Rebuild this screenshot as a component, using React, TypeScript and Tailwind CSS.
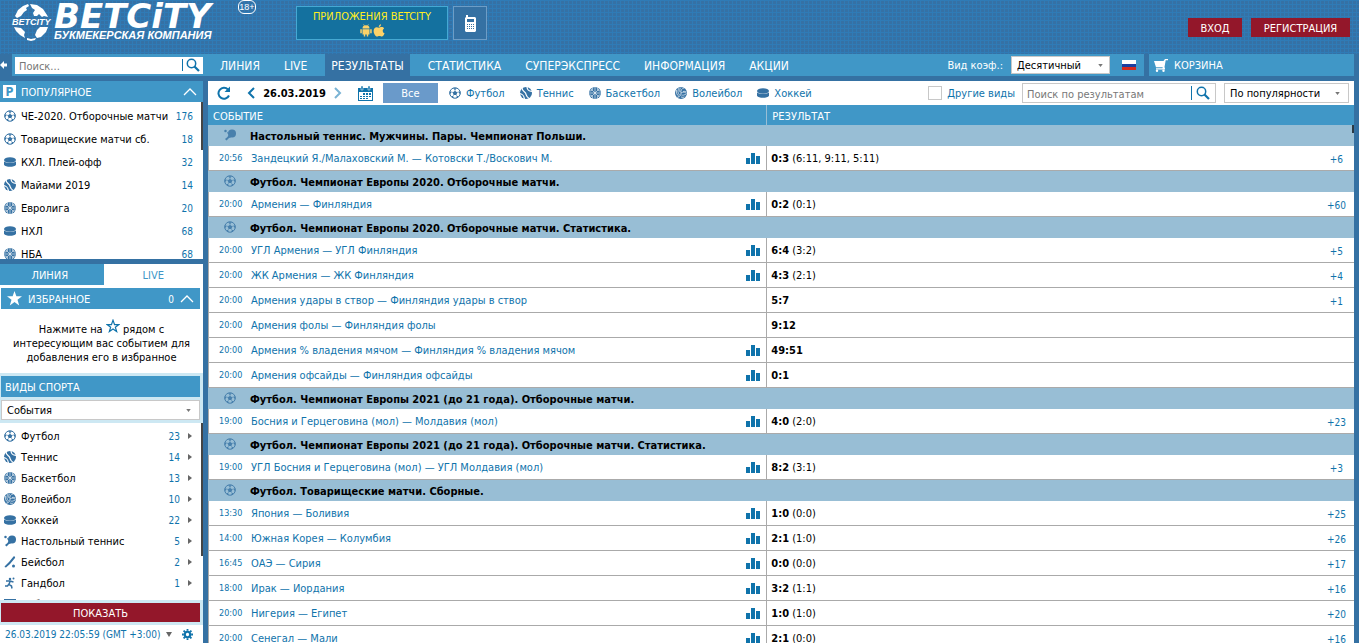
import type { ReactNode } from 'react';
import clsx from 'clsx';

type Sport =
  | 'football'
  | 'tennis'
  | 'basketball'
  | 'volleyball'
  | 'hockey'
  | 'tabletennis'
  | 'baseball'
  | 'handball'
  | 'futsal';

type Match = { time: string; name: string; score: string; detail?: string; stats?: boolean; extra?: string };
type Group = { sport: Sport; title: string; matches: Match[] };

const navItems = ['ЛИНИЯ', 'LIVE', 'РЕЗУЛЬТАТЫ', 'СТАТИСТИКА', 'СУПЕРЭКСПРЕСС', 'ИНФОРМАЦИЯ', 'АКЦИИ'];

const popular: { sport: Sport; name: string; count: number }[] = [
  { sport: 'football', name: 'ЧЕ-2020. Отборочные матчи', count: 176 },
  { sport: 'football', name: 'Товарищеские матчи сб.', count: 18 },
  { sport: 'hockey', name: 'КХЛ. Плей-офф', count: 32 },
  { sport: 'tennis', name: 'Майами 2019', count: 14 },
  { sport: 'basketball', name: 'Евролига', count: 20 },
  { sport: 'hockey', name: 'НХЛ', count: 68 },
  { sport: 'basketball', name: 'НБА', count: 68 },
];

const sports: { sport: Sport; name: string; count: number }[] = [
  { sport: 'football', name: 'Футбол', count: 23 },
  { sport: 'tennis', name: 'Теннис', count: 14 },
  { sport: 'basketball', name: 'Баскетбол', count: 13 },
  { sport: 'volleyball', name: 'Волейбол', count: 10 },
  { sport: 'hockey', name: 'Хоккей', count: 22 },
  { sport: 'tabletennis', name: 'Настольный теннис', count: 5 },
  { sport: 'baseball', name: 'Бейсбол', count: 2 },
  { sport: 'handball', name: 'Гандбол', count: 1 },
  { sport: 'futsal', name: 'Киберспорт', count: 1 },
];

const filters: { sport: Sport; name: string }[] = [
  { sport: 'football', name: 'Футбол' },
  { sport: 'tennis', name: 'Теннис' },
  { sport: 'basketball', name: 'Баскетбол' },
  { sport: 'volleyball', name: 'Волейбол' },
  { sport: 'hockey', name: 'Хоккей' },
];

const groups: Group[] = [
  {
    sport: 'tabletennis',
    title: 'Настольный теннис. Мужчины. Пары. Чемпионат Польши.',
    matches: [
      { time: '20:56', name: 'Зандецкий Я./Малаховский М. — Котовски Т./Воскович М.', score: '0:3', detail: '(6:11, 9:11, 5:11)', stats: true, extra: '+6' },
    ],
  },
  {
    sport: 'football',
    title: 'Футбол. Чемпионат Европы 2020. Отборочные матчи.',
    matches: [{ time: '20:00', name: 'Армения — Финляндия', score: '0:2', detail: '(0:1)', stats: true, extra: '+60' }],
  },
  {
    sport: 'football',
    title: 'Футбол. Чемпионат Европы 2020. Отборочные матчи. Статистика.',
    matches: [
      { time: '20:00', name: 'УГЛ Армения — УГЛ Финляндия', score: '6:4', detail: '(3:2)', stats: true, extra: '+5' },
      { time: '20:00', name: 'ЖК Армения — ЖК Финляндия', score: '4:3', detail: '(2:1)', stats: true, extra: '+4' },
      { time: '20:00', name: 'Армения удары в створ — Финляндия удары в створ', score: '5:7', extra: '+1' },
      { time: '20:00', name: 'Армения фолы — Финляндия фолы', score: '9:12' },
      { time: '20:00', name: 'Армения % владения мячом — Финляндия % владения мячом', score: '49:51', stats: true },
      { time: '20:00', name: 'Армения офсайды — Финляндия офсайды', score: '0:1', stats: true },
    ],
  },
  {
    sport: 'football',
    title: 'Футбол. Чемпионат Европы 2021 (до 21 года). Отборочные матчи.',
    matches: [{ time: '19:00', name: 'Босния и Герцеговина (мол) — Молдавия (мол)', score: '4:0', detail: '(2:0)', stats: true, extra: '+23' }],
  },
  {
    sport: 'football',
    title: 'Футбол. Чемпионат Европы 2021 (до 21 года). Отборочные матчи. Статистика.',
    matches: [{ time: '19:00', name: 'УГЛ Босния и Герцеговина (мол) — УГЛ Молдавия (мол)', score: '8:2', detail: '(3:1)', stats: true, extra: '+3' }],
  },
  {
    sport: 'football',
    title: 'Футбол. Товарищеские матчи. Сборные.',
    matches: [
      { time: '13:30', name: 'Япония — Боливия', score: '1:0', detail: '(0:0)', stats: true, extra: '+25' },
      { time: '14:00', name: 'Южная Корея — Колумбия', score: '2:1', detail: '(1:0)', stats: true, extra: '+26' },
      { time: '16:45', name: 'ОАЭ — Сирия', score: '0:0', detail: '(0:0)', stats: true, extra: '+17' },
      { time: '18:00', name: 'Ирак — Иордания', score: '3:2', detail: '(1:1)', stats: true, extra: '+16' },
      { time: '20:00', name: 'Нигерия — Египет', score: '1:0', detail: '(1:0)', stats: true, extra: '+20' },
      { time: '20:00', name: 'Сенегал — Мали', score: '2:1', detail: '(0:0)', stats: true, extra: '+16' },
    ],
  },
];

const sportShapes: Record<Sport, ReactNode> = {
  football: (
    <>
      <circle cx="12" cy="12" r="10.5" fill="none" stroke="currentColor" strokeWidth="2" />
      <path d="M12 7.500l4.600 3.300-1.800 5.400H9.200l-1.800-5.400z" />
      <path d="M12 8V4M16 11l4-1.500M14.500 16l2.500 3.500M9.500 16L7 19.500M8 11L4 9.500" stroke="currentColor" strokeWidth="1" />
      <path d="M8 2.500h8L12 6zM22.500 8l.5 7-4-4zM1.500 8L1 15l4-4zM14 22.500l6-4-4-.5zM10 22.500l-6-4 4-.5z" />
    </>
  ),
  tennis: (
    <>
      <circle cx="12" cy="12" r="12" />
      <path d="M4 1c0 8 5 7 7 11s1 8 8 11M14-1c0 7 3 9 11 10M-1 13c7 1 9 4 10 12" fill="none" stroke="white" strokeWidth="2.500" />
    </>
  ),
  basketball: (
    <>
      <circle cx="12" cy="12" r="12" />
      <path d="M4 4l16 16M20 4L4 20M12 0v24M0 12h24M7 1c1 5-1 7-6 7M17 23c-1-5 1-7 6-7M17 1c-1 5 1 7 6 7M7 23c1-5-1-7-6-7" fill="none" stroke="white" strokeWidth="1.200" />
    </>
  ),
  volleyball: (
    <>
      <circle cx="12" cy="12" r="12" />
      <path d="M12 12C11 7 13 3 18 2M12 12c5-3 8-2 11 1M12 12c0 5-3 8-8 9M8 2c-3 5-3 10 1 14M3 6c-1 6 1 10 5 13M16 9c3-1 5 0 7 1M13 16c3 1 6 0 9-2M12 20c3 1 5 1 7 0M12 1c-3 3-3 6-2 9" fill="none" stroke="white" strokeWidth="1.300" />
    </>
  ),
  hockey: (
    <>
      <ellipse cx="12" cy="8" rx="12" ry="5.500" />
      <path d="M0 10.500c3 4.500 21 4.500 24 0v7c-3 5.500-21 5.500-24 0z" />
    </>
  ),
  tabletennis: (
    <>
      <circle cx="16" cy="9" r="8" />
      <path d="M9 12l5 5-4 1-5 5-3-3 5-4z" />
      <circle cx="3" cy="4" r="2.500" />
      <path d="M6 7l4 3" stroke="currentColor" strokeWidth="2" />
    </>
  ),
  baseball: (
    <>
      <path d="M19 1c2-1 4 1 3 3L12 16l-8 7-3-1 1-2 8-8z" />
      <circle cx="19" cy="20" r="3" />
    </>
  ),
  handball: (
    <>
      <circle cx="12" cy="4" r="2.500" />
      <circle cx="19" cy="3" r="2" />
      <path d="M4 8h8l7 2M12 9l-2 6 5 3 1 5M10 14l-3 4H2" fill="none" stroke="currentColor" strokeWidth="3" />
    </>
  ),
  futsal: <path d="M0 2h24v18H0z" />,
};

function SportIcon({ sport, className }: { sport: Sport; className?: string }) {
  return (
    <svg viewBox="0 0 24 24" fill="currentColor" className={clsx('mb-[2px] size-3 shrink-0 text-[#3571a3]', className)}>
      {sportShapes[sport]}
    </svg>
  );
}

function SearchIcon() {
  return (
    <svg viewBox="0 0 14 14" fill="none" stroke="currentColor" className="size-[14px]">
      <circle cx="5.500" cy="5.500" r="4.200" strokeWidth="1.500" />
      <path d="M8.500 8.500l4.500 4.500" strokeWidth="2.200" />
    </svg>
  );
}

function SmallArrow() {
  return (
    <svg viewBox="0 0 6 4" fill="#777" className="pointer-events-none h-[3px] w-[5px] shrink-0">
      <path d="M0 0h6L3 4z" />
    </svg>
  );
}

function ChevronUp() {
  return (
    <svg viewBox="0 0 14 8" fill="none" stroke="white" strokeWidth="1.300" className="h-2 w-[14px]">
      <path d="M1 7l6-6 6 6" />
    </svg>
  );
}

function Globe() {
  return (
    <svg viewBox="0 0 38 38" className="size-[38px] shrink-0 overflow-visible" fill="white">
      <path d="M3 13l3-6 5-4 5-2 1 2-3 2 1 2-3 2-3 4-4 2z" />
      <path d="M18 1l7 1 6 4 4 6 1 2-4-1-2 1-3-3-2 2-3 0-1-3 2-3-3-2z" />
      <path d="M2 24l7 1 4 4-1 3 1 3-5-3-4-4z" />
      <path d="M25 27l3-3 8 0-2 5-5 5-4 1-2-3z" />
      <path d="M15 35l4 1 5-1-1 2-4 1-4-1z" />
      <text x="0" y="22" fontSize="9" fontWeight="700" fontStyle="italic" fontFamily="Liberation Sans, sans-serif">
        BETCITY
      </text>
    </svg>
  );
}

function Header() {
  return (
    <header className="flex h-[54px] shrink-0 items-start justify-between bg-[#3571a5] bg-[linear-gradient(#2f7bb6_1px,transparent_1px),linear-gradient(90deg,#2f7bb6_1px,transparent_1px)] bg-[size:4px_4px]">
      <div className="flex">
        <a href="#" className="flex w-[296px] pl-3 text-white">
          <span className="pt-[3px]">
            <Globe />
          </span>
          <span className="flex w-[188px] flex-col pt-[3px] pl-1">
            <span className="font-['DejaVu_Sans',sans-serif] text-[34px] leading-[26px] font-bold italic">BETCiTY</span>
            <span className="font-['Liberation_Sans',sans-serif] text-[11px] leading-[12px] font-bold italic">БУКМЕКЕРСКАЯ КОМПАНИЯ</span>
          </span>
          <span className="flex h-[14px] w-[18px] items-center justify-center rounded-md border border-white font-['Liberation_Sans',sans-serif] text-[9px]">
            18+
          </span>
        </a>
        <div className="flex gap-[5px] pt-[6px]">
          <button className="flex h-[34px] w-[152px] flex-col items-center border border-[#45a9d3] bg-[#14719f] pt-[3px] leading-[14px] text-[#ffee22]">
            ПРИЛОЖЕНИЯ BETCITY
            <span className="flex gap-px text-[#fdd268]">
              <svg viewBox="0 0 12 13" fill="currentColor" className="h-[13px] w-3">
                <path d="M2.500 4.500a3.500 3.300 0 017 0zM2.500 5.200h7v5.300h-1.300v2H6.800v-2H5.200v2H3.800v-2H2.500zM.3 5.200h1.500v4H.3zM10.200 5.200h1.500v4h-1.500z" />
                <path d="M3.500.3l1 1.500M8.500.3l-1 1.500" stroke="currentColor" strokeWidth=".6" />
              </svg>
              <svg viewBox="0 0 12 13" fill="currentColor" className="h-[13px] w-3">
                <path d="M8 .3c.1 1.500-.9 2.700-2.200 2.700C5.700 1.600 6.700.5 8 .3zM6 3.700c.7 0 1.500-.6 2.700-.6 1 0 1.900.5 2.400 1.300-2 1.200-1.700 4 .5 4.900-.5 1.400-1.600 3.300-2.800 3.300-.9 0-1.300-.5-2.400-.5s-1.500.5-2.400.5C2.500 12.600.6 9.500.6 7c0-2.400 1.500-3.800 3-3.800 1 0 1.700.5 2.400.5z" />
              </svg>
            </span>
          </button>
          <button aria-label="Мобильная версия" className="flex h-[34px] w-[34px] items-center justify-center border border-[#6d9dc6] bg-[#3571a3]">
            <svg viewBox="0 0 11 17" className="h-[17px] w-[11px]">
              <path d="M1 0h2v2h7l1 1v13l-1 1H1l-1-1V3l1-1z" fill="white" />
              <path d="M2 4h7v3H2zM2 9h1v1H2zM4 9h1v1H4zM6 9h1v1H6zM8 9h1v1H8zM2 11h1v1H2zM4 11h1v1H4zM6 11h1v1H6zM8 11h1v1H8zM2 13h1v1H2zM4 13h1v1H4zM6 13h1v1H6zM8 13h1v1H8z" fill="#3571a3" />
            </svg>
          </button>
        </div>
      </div>
      <div className="flex gap-[9px] pt-[18px] pr-[9px] text-white">
        <button className="h-[19px] w-[54px] bg-[#93172a] pt-[2px]">ВХОД</button>
        <button className="h-[19px] w-[99px] bg-[#93172a] pt-[2px]">РЕГИСТРАЦИЯ</button>
      </div>
    </header>
  );
}

function NavBar() {
  return (
    <div className="flex h-[22px] shrink-0 pr-[5px] text-[12px] text-white">
      <button aria-label="Свернуть меню" className="flex w-3 shrink-0 items-center">
        <svg viewBox="0 0 7 8" fill="white" className="h-2 w-[7px]">
          <path d="M0 4l4-4v2.500h3v3H4V8z" />
        </svg>
      </button>
      <div className="mr-[5px] flex flex-1 items-center bg-[#4097c7] pl-[3px]">
        <label className="flex h-[17px] w-[188px] items-center bg-white pr-[3px] text-[#0f73ab]">
          <input aria-label="Поиск" placeholder="Поиск..." className="w-0 flex-1 pt-[2px] pl-1 text-[11px] text-black outline-none placeholder:text-[#777]" />
          <span className="mr-[3px] h-3 w-px bg-[#0f73ab]" />
          <SearchIcon />
        </label>
        <nav className="flex h-[22px] flex-1 gap-3 pl-[11px]">
          {navItems.map((item) => (
            <a key={item} href="#" className={clsx('px-[6px] leading-[24px]', item === 'РЕЗУЛЬТАТЫ' && 'bg-[#3571a3]')}>
              {item}
            </a>
          ))}
        </nav>
        <label htmlFor="odds" className="pt-px pr-2 text-[11px]">
          Вид коэф.:
        </label>
        <div className="mr-3 flex h-[18px] w-[99px] items-center border border-[#c8c8c8] bg-white pr-[6px] text-[11px] text-black">
          <select id="odds" className="w-0 flex-1 appearance-none pt-px pl-[5px] outline-none">
            <option>Десятичный</option>
          </select>
          <SmallArrow />
        </div>
        <svg viewBox="0 0 14 10" className="mr-2 h-[10px] w-[14px]">
          <path d="M0 0h14v4H0z" fill="#fff" />
          <path d="M0 4h14v3H0z" fill="#1c3fa0" />
          <path d="M0 7h14v3H0z" fill="#d52b1e" />
        </svg>
      </div>
      <a href="#" className="flex w-[205px] items-center gap-[6px] bg-[#4097c7] pl-[5px] text-[11px]">
        <svg viewBox="0 0 14 13" fill="white" className="h-[13px] w-[14px]">
          <path d="M0 2h9.500L11 0h3v1.300h-2.300L10.500 8 11 9.500v1H2v-1.200h6.500l.2-1H2z" />
          <circle cx="3" cy="11.800" r="1.200" />
          <circle cx="9.500" cy="11.800" r="1.200" />
        </svg>
        <span className="pt-px">КОРЗИНА</span>
      </a>
    </div>
  );
}

function Sidebar() {
  return (
    <aside className="flex w-[203px] shrink-0 flex-col bg-white">
      <div className="flex h-[21px] shrink-0 items-center bg-[#4097c7] pr-[6px] pl-[3px] text-white">
        <span className="mr-[5px] flex h-[13px] w-[13px] items-center justify-center bg-white pt-px text-[12px] font-bold text-[#4097c7]">P</span>
        <span className="flex-1 pt-px">ПОПУЛЯРНОЕ</span>
        <ChevronUp />
      </div>
      <div className="relative h-[157px] shrink-0 overflow-hidden pt-[3px]">
        {popular.map((item) => (
          <a key={item.name} href="#" className="flex h-[23px] items-center gap-[5px] pr-[10px] pl-1">
            <SportIcon sport={item.sport} />
            <span className="flex-1 whitespace-nowrap">{item.name}</span>
            <span className="text-[10px] text-[#0f73ab]">{item.count}</span>
          </a>
        ))}
        <span className="absolute top-0 right-0 h-12 w-[2px] bg-[#444]" />
      </div>
      <div className="h-[5px] shrink-0 bg-[#3571a3]" />
      <div className="flex h-[21px] shrink-0">
        <button className="flex-1 bg-[#4097c7] pt-[2px] pr-1 text-white">ЛИНИЯ</button>
        <button className="flex-1 pt-[2px] text-[#4097c7]">LIVE</button>
      </div>
      <div className="mt-[3px] mr-[3px] ml-px flex h-[21px] shrink-0 items-center bg-[#4097c7] pr-[6px] pl-[6px] text-white">
        <svg viewBox="0 0 24 24" fill="white" className="mr-[6px] size-[15px]">
          <path d="M12 0l3 8.500h9l-7.200 5.500 2.700 9L12 17.500 4.500 23l2.700-9L0 8.500h9z" />
        </svg>
        <span className="flex-1 pt-px">ИЗБРАННОЕ</span>
        <span className="mr-[6px] pt-px text-[10px]">0</span>
        <ChevronUp />
      </div>
      <p className="h-16 shrink-0 px-2 pt-[14px] text-center leading-[14px]">
        Нажмите на{' '}
        <svg viewBox="0 0 24 24" fill="none" stroke="#0f73ab" strokeWidth="2" className="-mt-2 inline-block size-[14px] align-baseline">
          <path d="M12 2l2.600 7.500H22l-6 4.500 2.300 7.500L12 17l-6.300 4.500L8 14 2 9.500h7.400z" />
        </svg>{' '}
        рядом с<br />
        интересующим вас событием для добавления его в избранное
      </p>
      <div className="h-[50px] shrink-0 bg-[#cde8f3] pt-[3px] pr-[3px] pl-px">
        <label htmlFor="kind" className="mb-[3px] flex h-[21px] items-center bg-[#4097c7] pt-px pl-1 text-white">
          ВИДЫ СПОРТА
        </label>
        <div className="flex h-5 items-center border border-[#c8c8c8] bg-white pr-2">
          <select id="kind" className="w-0 flex-1 appearance-none pt-px pl-[5px] outline-none">
            <option>События</option>
          </select>
          <SmallArrow />
        </div>
      </div>
      <div className="relative min-h-0 flex-1 overflow-hidden pt-[3px]">
        {sports.map((item) => (
          <a key={item.name} href="#" className="flex h-[21px] items-center pr-[11px] pl-1">
            <SportIcon sport={item.sport} className="mr-[5px]" />
            <span className="flex-1">{item.name}</span>
            <span className="mr-2 text-[10px] text-[#0f73ab]">{item.count}</span>
            <svg viewBox="0 0 4 6" fill="#666" className="mb-[2px] h-[6px] w-1">
              <path d="M0 0l4 3-4 3z" />
            </svg>
          </a>
        ))}
        <span className="absolute top-0 right-0 h-[133px] w-[2px] bg-[#444]" />
      </div>
      <div className="shrink-0 bg-[#cde8f3] py-[3px] pr-[3px] pl-px">
        <button className="block h-[19px] w-full bg-[#93172a] pt-[2px] text-white">ПОКАЗАТЬ</button>
      </div>
      <div className="flex h-[18px] shrink-0 items-center pl-[5px] text-[10px] text-[#0f73ab]">
        26.03.2019 22:05:59 (GMT +3:00)
        <svg viewBox="0 0 6 5" fill="#666" className="mr-[10px] ml-[6px] h-[5px] w-[6px]">
          <path d="M0 0h6L3 5z" />
        </svg>
        <svg viewBox="0 0 12 12" fill="none" stroke="currentColor" className="size-[11px]">
          <circle cx="6" cy="6" r="3" strokeWidth="2.400" />
          <path d="M6 0v2M6 10v2M0 6h2M10 6h2M1.700 1.700l1.500 1.500M8.800 8.800l1.500 1.500M1.700 10.300l1.500-1.500M8.800 3.200l1.500-1.500" strokeWidth="2" />
        </svg>
      </div>
    </aside>
  );
}

function Toolbar() {
  return (
    <div className="flex h-6 shrink-0 items-center bg-white pr-[5px] pl-[9px] text-[#0f73ab]">
      <button aria-label="Обновить">
        <svg viewBox="0 0 14 14" fill="none" stroke="currentColor" strokeWidth="2" className="size-[14px]">
          <path d="M12 9.500a5.500 5.500 0 11-1-6" />
          <path d="M13 .5v5.500H7.500z" fill="currentColor" stroke="none" />
        </svg>
      </button>
      <button aria-label="Предыдущий день" className="ml-4">
        <svg viewBox="0 0 8 12" fill="none" stroke="currentColor" strokeWidth="2" className="h-3 w-2">
          <path d="M7 1L2 6l5 5" />
        </svg>
      </button>
      <b className="w-[79px] pt-px text-center text-black">26.03.2019</b>
      <button aria-label="Следующий день" className="text-[#7ab3d4]">
        <svg viewBox="0 0 8 12" fill="none" stroke="currentColor" strokeWidth="2" className="h-3 w-2">
          <path d="M1 1l5 5-5 5" />
        </svg>
      </button>
      <button aria-label="Календарь" className="ml-4">
        <svg viewBox="0 0 15 15" className="size-[15px]" fill="currentColor">
          <path d="M0 2h15v13H0zM1 6v8h13V6z" fillRule="evenodd" />
          <path d="M3 0h2v4H3zM10 0h2v4h-2z" stroke="white" strokeWidth=".5" />
          <path d="M5 7h2v2H5zM8 7h2v2H8zM11 7h2v2h-2zM2 10h2v1H2zM5 10h2v1H5zM8 10h2v1H8zM11 10h2v1h-2zM2 12h2v1H2zM5 12h2v1H5zM8 12h2v1H8z" />
        </svg>
      </button>
      <button className="mr-[11px] ml-[10px] h-5 w-[55px] bg-[#6a9aca] pt-px text-white">Все</button>
      <div className="flex flex-1 gap-[15px]">
        {filters.map((f) => (
          <a key={f.name} href="#" className="flex items-center gap-[5px] pt-px">
            <SportIcon sport={f.sport} />
            {f.name}
          </a>
        ))}
      </div>
      <label className="mr-[7px] flex items-center gap-[5px]">
        <input type="checkbox" className="size-[14px] appearance-none border border-[#c8c8c8]" />
        <span className="pt-px">Другие виды</span>
      </label>
      <label className="mr-2 flex h-5 w-[194px] items-center border border-[#c8c8c8] pr-[5px]">
        <input aria-label="Поиск по результатам" placeholder="Поиск по результатам" className="w-0 flex-1 pt-[2px] pl-1 text-black outline-none placeholder:text-[#777]" />
        <span className="mr-1 h-[14px] w-px bg-[#0f73ab]" />
        <SearchIcon />
      </label>
      <div className="flex h-5 w-[125px] items-center border border-[#c8c8c8] pr-2 text-black">
        <select aria-label="Сортировка" className="w-0 flex-1 appearance-none pt-px pl-[5px] outline-none">
          <option>По популярности</option>
        </select>
        <SmallArrow />
      </div>
    </div>
  );
}

function ResultsTable() {
  return (
    <table className="w-full table-fixed border-separate border-spacing-0 bg-white">
      <colgroup>
        <col className="w-[42px]" />
        <col className="w-[42%]" />
        <col className="w-9" />
        <col />
        <col className="w-12" />
      </colgroup>
      <thead>
        <tr className="h-5 bg-[#4097c7] text-left text-white">
          <th colSpan={3} className="border-r border-[#98bed5] pt-[2px] pl-[5px] font-normal">
            СОБЫТИЕ
          </th>
          <th colSpan={2} className="pt-[2px] pl-[5px] font-normal">
            РЕЗУЛЬТАТ
          </th>
        </tr>
      </thead>
      {groups.map((group) => (
        <tbody key={group.title}>
          <tr className="h-[21px] bg-[#98bed5]">
            <td>
              <SportIcon sport={group.sport} className="ml-4 opacity-80" />
            </td>
            <th colSpan={4} className="pt-[2px] text-left font-bold">
              {group.title}
            </th>
          </tr>
          {group.matches.map((m) => (
            <tr key={m.name} className="h-[25px] text-[#0f73ab] [&>td]:border-b [&>td]:border-[#aaa]">
              <td className="border-l pl-[10px] text-[9px]">{m.time}</td>
              <td className="pl-px whitespace-nowrap">
                <a href="#">{m.name}</a>
              </td>
              <td className="border-r pt-px pr-[6px]">
                {m.stats && (
                  <svg viewBox="0 0 14 11" fill="#0f73ab" className="ml-auto h-[11px] w-[14px]">
                    <path d="M0 5h4v6H0zM5 0h4v11H5zM10 3h4v8h-4z" />
                  </svg>
                )}
              </td>
              <td className="pl-1 text-black">
                <b>{m.score}</b> {m.detail}
              </td>
              <td className={clsx('pt-[2px] text-right text-[10px]', m.extra?.length === 2 ? 'pr-[11px]' : 'pr-2')}>{m.extra}</td>
            </tr>
          ))}
        </tbody>
      ))}
    </table>
  );
}

export default function App() {
  return (
    <div className="flex h-screen flex-col overflow-hidden bg-[#3571a3] font-['DejaVu_Sans_Condensed','DejaVu_Sans',sans-serif] text-[11px] leading-[17px] text-black">
      <Header />
      <NavBar />
      <div className="mt-[5px] flex min-h-0 flex-1 gap-[5px] pr-[5px]">
        <Sidebar />
        <main className="relative flex min-w-0 flex-1 flex-col">
          <Toolbar />
          <div className="min-h-0 flex-1 overflow-hidden">
            <ResultsTable />
          </div>
          <span className="absolute top-11 right-0 h-2 w-[2px] bg-[#2b3a45]" />
        </main>
      </div>
    </div>
  );
}
